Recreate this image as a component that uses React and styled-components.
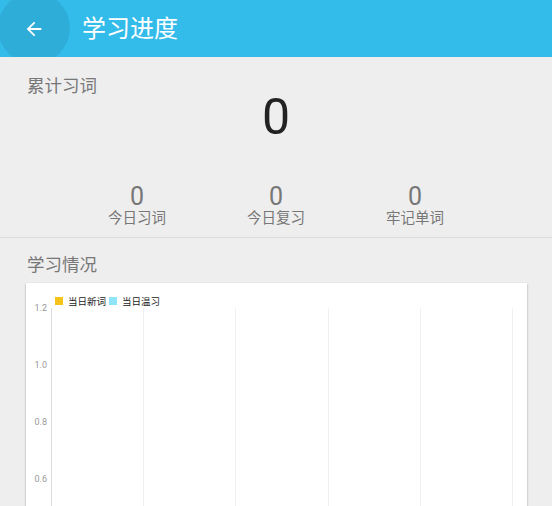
import React from "react";
import styled, { createGlobalStyle } from "styled-components";

const GlobalStyle = createGlobalStyle`
  html, body {
    margin: 0;
    padding: 0;
    background: #eeeeee;
  }
  body {
    font-family: Roboto, "Noto Sans CJK SC", sans-serif;
  }
`;

const stats = [
  { value: 0, label: "今日习词" },
  { value: 0, label: "今日复习" },
  { value: 0, label: "牢记单词" },
];

const yTicks = [
  { label: "1.2", y: 24 },
  { label: "1.0", y: 81 },
  { label: "0.8", y: 138 },
  { label: "0.6", y: 195 },
];

const gridX = [25, 117, 209, 302, 394, 486];

function StudyChart() {
  return (
    <svg width="500" height="240" viewBox="0 0 500 240">
      <rect x="29" y="14" width="8" height="8" fill="#f6c31b" />
      <text x="42" y="21.5" fontSize="9.5" fill="#222">当日新词</text>
      <rect x="83" y="14" width="8" height="8" fill="#8fe4f8" />
      <text x="96" y="21.5" fontSize="9.5" fill="#222">当日温习</text>
      {gridX.map((x, i) => (
        <line
          key={x}
          x1={x + 0.5}
          x2={x + 0.5}
          y1="25"
          y2="240"
          stroke={i === 0 ? "#dcdcdc" : "#f0f0f0"}
          strokeWidth="1"
        />
      ))}
      {yTicks.map((t) => (
        <text
          key={t.label}
          x="21"
          y={t.y + 3.5}
          fontSize="9"
          fill="#9a9a9a"
          textAnchor="end"
        >
          {t.label}
        </text>
      ))}
    </svg>
  );
}

function App() {
  return (
    <>
      <GlobalStyle />
      <Page>
        <Header>
          <BackButton>
            <svg width="22" height="22" viewBox="0 0 24 24">
              <path
                d="M20 11H7.83l5.59-5.59L12 4l-8 8 8 8 1.41-1.41L7.83 13H20v-2z"
                fill="#fff"
              />
            </svg>
          </BackButton>
          <Title>学习进度</Title>
        </Header>

        <Summary>
          <SectionLabel>累计习词</SectionLabel>
          <BigNumber>0</BigNumber>
          <StatRow>
            {stats.map((s) => (
              <Stat key={s.label}>
                <StatValue>{s.value}</StatValue>
                <StatLabel>{s.label}</StatLabel>
              </Stat>
            ))}
          </StatRow>
        </Summary>

        <ChartSection>
          <SectionLabel>学习情况</SectionLabel>
          <ChartCard>
            <StudyChart />
          </ChartCard>
        </ChartSection>
      </Page>
    </>
  );
}

const Page = styled.div`
  width: 552px;
  height: 506px;
  overflow: hidden;
  background: #eeeeee;
`;

const Header = styled.header`
  position: relative;
  height: 57px;
  background: #33bbea;
  display: flex;
  align-items: center;
  overflow: hidden;
`;

const BackButton = styled.div`
  width: 68px;
  height: 57px;
  display: flex;
  align-items: center;
  justify-content: center;
  position: relative;
  &::before {
    content: "";
    position: absolute;
    left: -2px;
    top: -8px;
    width: 72px;
    height: 72px;
    border-radius: 50%;
    background: rgba(0, 0, 0, 0.07);
  }
  svg {
    position: relative;
  }
`;

const Title = styled.h1`
  margin: 0 0 0 14px;
  font-size: 24px;
  font-weight: 400;
  color: #fff;
  line-height: 1;
`;

const Summary = styled.section`
  padding: 17px 0 0;
  height: 163px;
  border-bottom: 1px solid #dddddd;
  display: flex;
  flex-direction: column;
`;

const SectionLabel = styled.div`
  padding-left: 27px;
  font-size: 17.5px;
  line-height: 24px;
  color: #777777;
`;

const BigNumber = styled.div`
  margin-top: -6px;
  text-align: center;
  font-size: 50px;
  line-height: 50px;
  color: #222222;
`;

const StatRow = styled.div`
  margin-top: 43px;
  display: grid;
  grid-template-columns: repeat(3, 139px);
  justify-content: center;
`;

const Stat = styled.div`
  display: flex;
  flex-direction: column;
  align-items: center;
`;

const StatValue = styled.div`
  font-size: 25px;
  line-height: 24px;
  color: #777777;
`;

const StatLabel = styled.div`
  font-size: 14.5px;
  line-height: 20px;
  color: #777777;
`;

const ChartSection = styled.section`
  padding-top: 15px;
`;

const ChartCard = styled.div`
  margin: 6px 0 0 26px;
  width: 501px;
  height: 260px;
  background: #ffffff;
  box-shadow: 0 1px 2px rgba(0, 0, 0, 0.35);
  svg {
    display: block;
  }
`;

export default App;
